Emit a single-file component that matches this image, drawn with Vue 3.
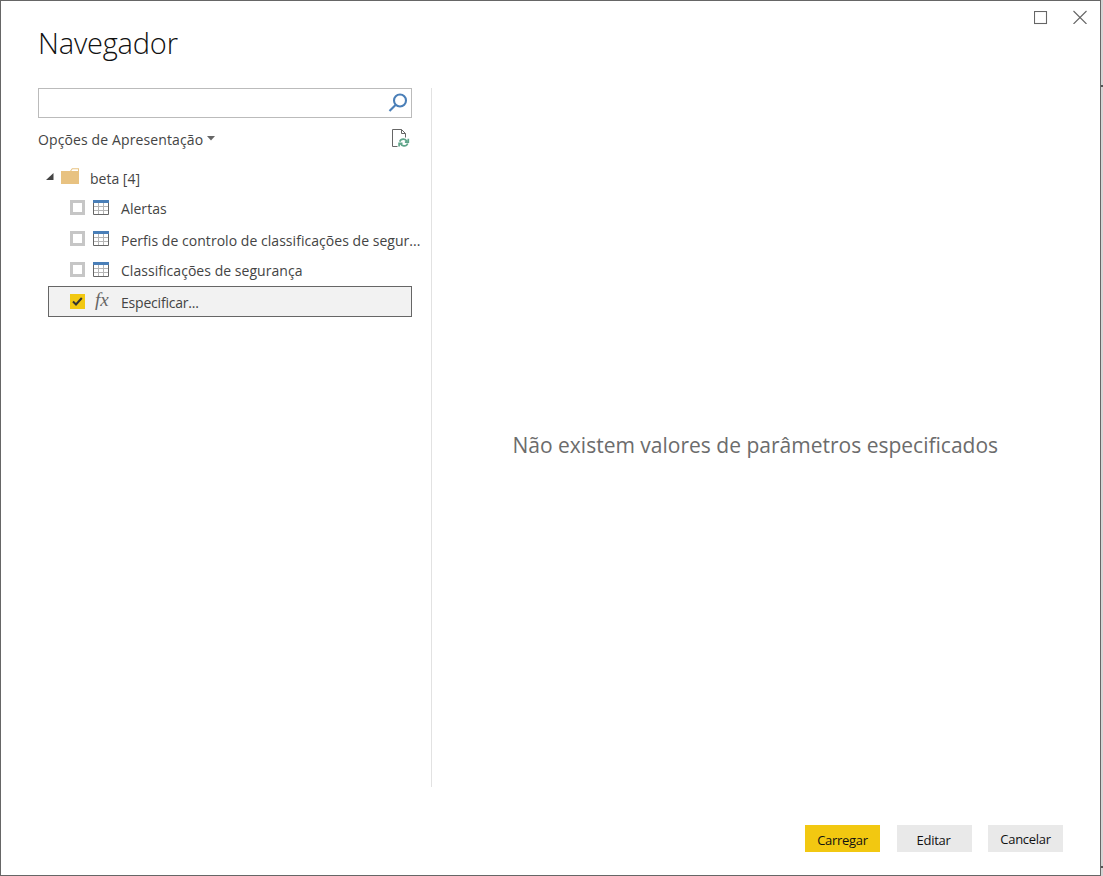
<script setup>
import { ref } from 'vue'

const query = ref('')
const items = ref([
  { label: 'Alertas', kind: 'table', cls: 'alerts' },
  { label: 'Perfis de controlo de classificações de segur...', kind: 'table', cls: 'profiles' },
  { label: 'Classificações de segurança', kind: 'table', cls: 'scores' },
  { label: 'Especificar...', kind: 'function', cls: 'specify', checked: true },
])
</script>

<template>
  <div class="screen">
    <section class="dialog">
      <header class="top">
        <h1><span>Navegador</span></h1>
        <div class="controls">
          <svg width="14" height="14" viewBox="0 0 14 14"><rect x=".5" y=".5" width="12" height="12" /></svg>
          <svg width="14" height="14" viewBox="0 0 14 14"><path d="M.5 1l13 13M13.5 1l-13 13" /></svg>
        </div>
      </header>

      <main class="body">
        <aside class="nav">
          <label class="search">
            <input v-model="query" type="text" />
            <svg width="20" height="20" viewBox="0 0 20 20">
              <circle cx="12" cy="7.5" r="6" /><path d="M7.5 12L1.5 18" />
            </svg>
          </label>
          <div class="options">
            <span class="options-text">Opções de Apresentação</span>
            <svg class="caret" width="8" height="5" viewBox="0 0 8 5"><path d="M0 0h8L4 4.5z" /></svg>
            <svg class="refresh" width="19" height="20" viewBox="0 0 19 20">
              <path class="page" d="M6.5 18.5h-5v-17h9l4 4v4M10.5 1.5v4h4" />
              <path class="arrows" d="M8.7 13.6c.7-1.8 2.3-2.6 4-2.4 1.5.2 2.4.9 3.1 2.1M17.3 10.8v3.3h-3.4M16.7 15.5c-.7 1.8-2.3 2.6-4 2.4-1.5-.2-2.4-.9-3.1-2.1M8.1 18.6v-3.3h3.4" />
            </svg>
          </div>
          <div class="folder">
            <svg class="expander" width="8" height="8" viewBox="0 0 8 8"><path d="M7.5 0v7H0z" /></svg>
            <svg class="folder-icon" width="19" height="17" viewBox="0 0 19 17">
              <path fill="#e8c281" d="M0 3h9l2-2.8h7V16H0z" /><path fill="#fff" d="M10.2 3l1.3-1.8H17V3z" />
            </svg>
            <span>beta [4]</span>
          </div>
          <ul>
            <li v-for="item in items" :key="item.label" :class="[item.cls, { selected: item.checked }]">
              <span class="box" :class="{ checked: item.checked }">
                <svg v-if="item.checked" width="15" height="15" viewBox="0 0 15 15"><path d="M3 7.5l3 3L11.8 4" /></svg>
              </span>
              <svg v-if="item.kind === 'table'" class="table" width="16" height="15" viewBox="0 0 16 15">
                <path class="grid" d="M5.5 3v11M10.5 3v11M1 6.5h14M1 10.5h14" />
                <path class="frame" d="M.5 3v11.5h15V3" /><path class="head" d="M0 0h16v3H0z" />
              </svg>
              <span v-else class="fx">fx</span>
              <span class="label">{{ item.label }}</span>
            </li>
          </ul>
        </aside>
        <section class="preview"><p>Não existem valores de parâmetros especificados</p></section>
      </main>

      <footer>
        <button class="primary"><span>Carregar</span></button>
        <button class="edit"><span>Editar</span></button>
        <button class="cancel"><span>Cancelar</span></button>
      </footer>
    </section>
    <div class="edge"><i></i><i></i></div>
  </div>
</template>

<style>
body { margin: 0; overflow: hidden; }
</style>

<style scoped>
* { box-sizing: border-box; }
.screen { width: 1103px; height: 876px; display: flex; background: #fff; font-family: "Open Sans", "Noto Sans", sans-serif; color: #444; }
.dialog { width: 1101px; height: 876px; border: 1px solid #666; display: flex; flex-direction: column; }
.edge { flex: 1; background: #d5d5d5; display: flex; flex-direction: column; justify-content: space-between; padding: 85px 0 8px; }
.edge i { height: 2px; background: #555; }
.top { height: 87px; display: flex; justify-content: space-between; padding: 9px 13px 0 37px; }
h1 { margin: 13px 0 0; font-size: 29px; line-height: 40px; font-weight: 300; color: #111; letter-spacing: -.2px; }
.controls { display: flex; gap: 25px; }
.controls svg { fill: none; stroke: #666; stroke-width: 1.1; }
.controls svg:first-child { margin-top: 1px; }
.body { height: 699px; display: flex; }
.nav { width: 431px; padding-left: 37px; border-right: 1px solid #e2e2e2; }
.search { width: 374px; height: 30px; border: 1px solid #bbb; display: flex; align-items: center; padding-right: 3px; }
.search input { flex: 1; min-width: 0; border: 0; outline: 0; background: transparent; }
.search svg { fill: none; stroke: #4a7fb8; stroke-width: 2.1; }
.options { height: 42px; width: 374px; display: flex; align-items: center; font-size: 14px; }
.options-text { white-space: nowrap; letter-spacing: .12px; }
.caret { margin: 0 0 2px 4px; fill: #666; }
.refresh { margin: 0 2px 2px auto; fill: none; stroke-width: 1; }
.page { stroke: #666; }
.arrows { stroke: #5fa58a; stroke-width: 1.7; }
.folder { height: 32px; margin-top: 2px; display: flex; align-items: center; padding-left: 8px; font-size: 14px; }
.expander { margin-bottom: 2px; fill: #444; }
.folder-icon { margin: 0 10px 4px 7px; }
ul { list-style: none; margin: -2px 0 0; padding: 0 0 0 10px; }
li { width: 364px; height: 31px; display: flex; align-items: center; padding-left: 22px; font-size: 14px; white-space: nowrap; }
.box { width: 15px; height: 15px; border: 3px solid #c6c6c6; flex: none; }
.box.checked { border: 0; background: #f2c811; }
.checked svg { display: block; fill: none; stroke: #333; stroke-width: 2; }
.table { margin: 0 12px 0 8px; flex: none; }
.grid { fill: none; stroke: #b5b5b5; }
.frame { fill: none; stroke: #666; }
.head { fill: #4a7fb8; }
.fx { font: italic 19px/20px "Liberation Serif", serif; width: 26px; margin: -3px 0 0 10px; color: #666; }
.label { padding-top: 2px; letter-spacing: .04px; }
.profiles .label { padding-top: 4px; }
.specify .label { letter-spacing: -.2px; }
li.selected { margin-top: 1px; background: #f2f2f2; border: 1px solid #666; padding-left: 21px; }
.preview { flex: 1; display: flex; justify-content: center; align-items: center; padding: 12px 21px 0 0; }
.preview p { margin: 0; font-size: 22px; color: #6c6c6c; white-space: nowrap; transform: scaleX(.955); }
footer { height: 65px; padding: 38px 37px 0 0; display: flex; justify-content: flex-end; }
button { width: 75px; height: 27px; padding: 3px 0 0; border: 0; background: #e9e9e9; font: 13px/24px "Open Sans", "Noto Sans", sans-serif; letter-spacing: -.3px; color: #111; }
button.primary { background: #f2c811; }
.edit { margin: 0 16px 0 17px; padding-right: 2px; }
.cancel { padding-top: 1px; }
</style>
